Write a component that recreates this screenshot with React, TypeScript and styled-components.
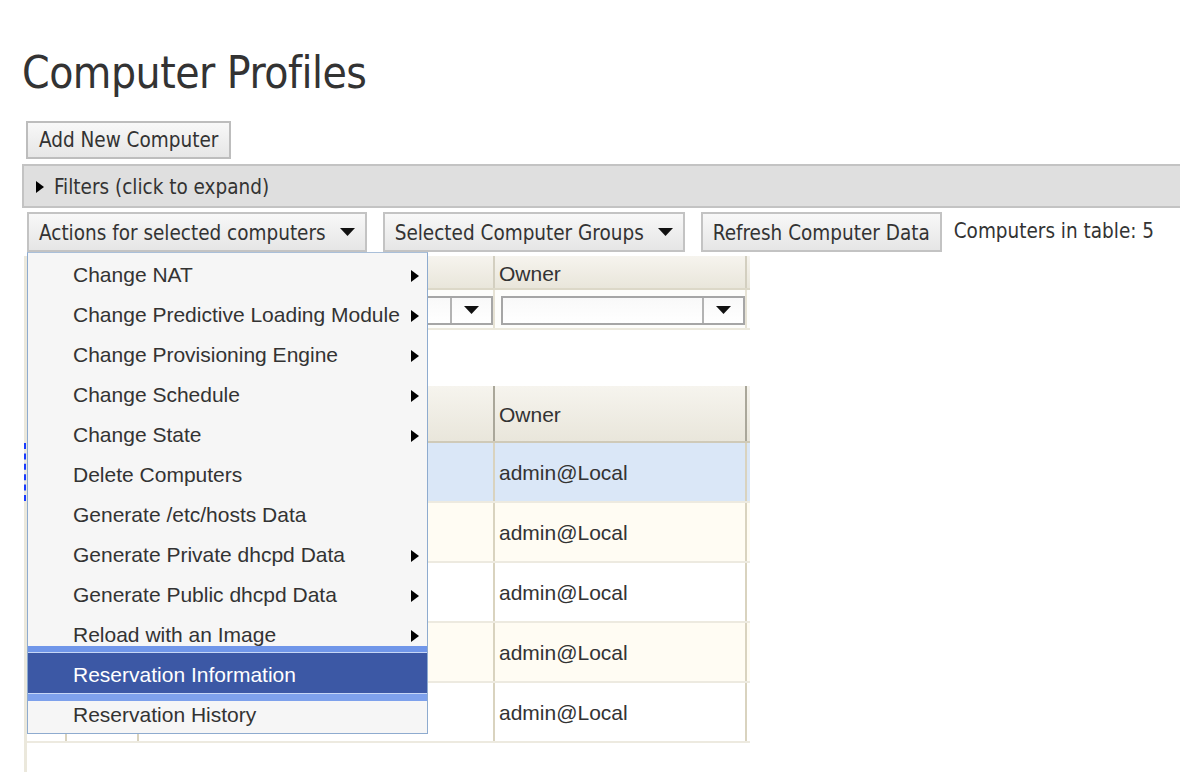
import React from 'react';
import styled, { createGlobalStyle } from 'styled-components';

const GlobalStyle = createGlobalStyle`
  body {
    margin: 0;
    background: #fff;
    color: #333;
    font-family: "DejaVu Sans Condensed", "DejaVu Sans", sans-serif;
    font-stretch: condensed;
    overflow: hidden;
  }
`;

const menuItems = [
  { label: 'Change NAT', sub: true },
  { label: 'Change Predictive Loading Module', sub: true },
  { label: 'Change Provisioning Engine', sub: true },
  { label: 'Change Schedule', sub: true },
  { label: 'Change State', sub: true },
  { label: 'Delete Computers', sub: false },
  { label: 'Generate /etc/hosts Data', sub: false },
  { label: 'Generate Private dhcpd Data', sub: true },
  { label: 'Generate Public dhcpd Data', sub: true },
  { label: 'Reload with an Image', sub: true },
  { label: 'Reservation Information', sub: false, active: true },
  { label: 'Reservation History', sub: false },
];

const rows = [
  { owner: 'admin@Local', tone: 'selected' },
  { owner: 'admin@Local', tone: 'cream' },
  { owner: 'admin@Local', tone: 'white' },
  { owner: 'admin@Local', tone: 'cream' },
  { owner: 'admin@Local', tone: 'white' },
];

const RightArrow = () => (
  <svg width="8" height="12" viewBox="0 0 8 12">
    <path d="M0 0 L8 6 L0 12 Z" fill="#000" />
  </svg>
);

const DownArrow = ({ w = 15 }: { w?: number }) => (
  <svg width={w} height="8" viewBox="0 0 15 8">
    <path d="M0 0 L15 0 L7.5 8 Z" fill="#111" />
  </svg>
);

const App = () => {
  return (
    <Page>
      <GlobalStyle />
      <Title>Computer Profiles</Title>
      <AddButton>Add New Computer</AddButton>
      <FilterBar>
        <RightArrow />
        <span>Filters (click to expand)</span>
      </FilterBar>
      <Toolbar>
        <Dropdown>
          <ToolButton>
            Actions for selected computers <DownArrow />
          </ToolButton>
          <Menu>
            {menuItems.map((item) => (
              <MenuItem key={item.label} $active={!!item.active}>
                <span>{item.label}</span>
                {item.sub && <RightArrow />}
              </MenuItem>
            ))}
          </Menu>
        </Dropdown>
        <ToolButton>
          Selected Computer Groups <DownArrow />
        </ToolButton>
        <ToolButton>Refresh Computer Data</ToolButton>
        <Count>Computers in table: 5</Count>
      </Toolbar>
      <Grid>
        <HeadRow $tall={false}>
          <HeadCell $dark={false} />
          <HeadCell $dark={false} />
          <HeadCell $dark={false} />
          <HeadCell $dark={false}>Owner</HeadCell>
        </HeadRow>
        <FilterRow>
          <FilterCell />
          <FilterCell />
          <FilterCell>
            <Select>
              <SelectArrow>
                <DownArrow w={15} />
              </SelectArrow>
            </Select>
          </FilterCell>
          <FilterCell>
            <Select>
              <SelectArrow>
                <DownArrow w={15} />
              </SelectArrow>
            </Select>
          </FilterCell>
        </FilterRow>
        <HeadRow $tall>
          <HeadCell $dark />
          <HeadCell $dark />
          <HeadCell $dark />
          <HeadCell $dark>Owner</HeadCell>
        </HeadRow>
        {rows.map((row, i) => (
          <DataRow key={i} $tone={row.tone}>
            <DataCell />
            <DataCell />
            <DataCell />
            <DataCell>{row.owner}</DataCell>
          </DataRow>
        ))}
      </Grid>
    </Page>
  );
};

export default App;

const Page = styled.div`
  display: flex;
  flex-direction: column;
  align-items: flex-start;
  padding: 47px 0 0 22px;
  height: 100vh;
  box-sizing: border-box;
  overflow: hidden;
`;

const Title = styled.h1`
  margin: 0 0 22px 0;
  font-size: 44px;
  letter-spacing: -0.5px;
  font-weight: normal;
  line-height: 52px;
  color: #333;
`;

const AddButton = styled.button`
  height: 38px;
  margin-left: 4px;
  padding: 0 11px;
  font-family: inherit;
  font-stretch: condensed;
  font-size: 20.5px;
  color: #333;
  background: linear-gradient(#f8f8f8, #e6e6e6);
  border: 2px solid #bdbdbd;
  border-radius: 0;
`;

const FilterBar = styled.div`
  align-self: stretch;
  margin: 5px -6px 0 0;
  height: 44px;
  box-sizing: border-box;
  display: flex;
  align-items: center;
  gap: 10px;
  padding: 2px 0 0 12px;
  background: #dfdfdf;
  border: 2px solid #c3c3c3;
  font-size: 20.5px;
  color: #333;
`;

const Toolbar = styled.div`
  margin: 4px 0 0 5px;
  display: flex;
  align-items: center;
  gap: 16px;
`;

const Dropdown = styled.div`
  position: relative;
`;

const ToolButton = styled.button`
  height: 40px;
  display: flex;
  align-items: center;
  gap: 14px;
  padding: 2px 10px 0;
  font-family: inherit;
  font-stretch: condensed;
  font-size: 20.5px;
  color: #333;
  background: linear-gradient(#f8f8f8, #e6e6e6);
  border: 2px solid #c3c3c3;
  border-radius: 0;
  svg {
    margin-top: -2px;
  }
`;

const Count = styled.span`
  font-size: 20.5px;
  color: #333;
  margin: -3px 0 0 -4px;
`;

const Menu = styled.div`
  position: absolute;
  top: 100%;
  left: 0;
  z-index: 10;
  width: 401px;
  box-sizing: border-box;
  background: #f6f6f6;
  border: 1px solid #8eabcf;
  border-top-color: #a9bfd9;
  padding: 0;
`;

const MenuItem = styled.div<{ $active: boolean }>`
  position: relative;
  height: 40px;
  box-sizing: border-box;
  display: flex;
  align-items: center;
  justify-content: space-between;
  padding: 3px 8px 0 45px;
  font-family: "Liberation Sans", Arial, sans-serif;
  font-stretch: normal;
  font-size: 21px;
  color: ${(p) => (p.$active ? '#fff' : '#333')};
  background: ${(p) => (p.$active ? '#3c58a5' : 'transparent')};
  z-index: ${(p) => (p.$active ? 1 : 0)};
  box-shadow: ${(p) =>
    p.$active
      ? '0 -1px 0 #c6d6f6, 0 -7px 0 #7096e9, 0 1px 0 #c6d6f6, 0 8px 0 #7ea1ec'
      : 'none'};
  svg {
    margin-top: 2px;
  }
`;

const Grid = styled.div`
  flex: 1;
  margin: 4px 0 0 2px;
  width: 723px;
  border-left: 3px solid #ebe8dc;
`;

const cols = '40px 72px 356px 252px';

const HeadRow = styled.div<{ $tall: boolean }>`
  display: grid;
  grid-template-columns: ${cols};
  height: ${(p) => (p.$tall ? 57 : 34)}px;
  margin-top: ${(p) => (p.$tall ? 56 : 0)}px;
  box-sizing: border-box;
  background: linear-gradient(#f6f4ee, #e9e6db);
  border-bottom: 2px solid ${(p) => (p.$tall ? '#cfcab8' : '#dcd8c8')};
`;

const HeadCell = styled.div<{ $dark: boolean }>`
  display: flex;
  align-items: center;
  padding: 3px 0 0 4px;
  border-right: 2px solid ${(p) => (p.$dark ? '#aaa79a' : '#d3cfc0')};
  font-family: "Liberation Sans", Arial, sans-serif;
  font-stretch: normal;
  font-size: 21px;
  color: #333;
`;

const FilterRow = styled.div`
  display: grid;
  grid-template-columns: ${cols};
  height: 40px;
  box-sizing: border-box;
  background: #fdfdfb;
  border-bottom: 2px solid #ece9dd;
`;

const FilterCell = styled.div`
  display: flex;
  align-items: center;
  padding: 2px 0 0 6px;
  border-right: 2px solid #e6e2d4;
`;

const Select = styled.div`
  flex: 1;
  height: 29px;
  box-sizing: border-box;
  display: flex;
  justify-content: flex-end;
  background: linear-gradient(#f9f9f9, #fff);
  border: 2px solid #a6a6a6;
`;

const SelectArrow = styled.div`
  width: 39px;
  display: flex;
  align-items: center;
  justify-content: center;
  border-left: 2px solid #b3b3b3;
`;

const toneBg: Record<string, string> = {
  selected: '#dae7f7',
  cream: '#fffcf3',
  white: '#ffffff',
};

const DataRow = styled.div<{ $tone: string }>`
  position: relative;
  display: grid;
  grid-template-columns: ${cols};
  height: 60px;
  box-sizing: border-box;
  background: ${(p) => toneBg[p.$tone]};
  border-bottom: 2px solid #edeae0;
  &::before {
    content: '';
    display: ${(p) => (p.$tone === 'selected' ? 'block' : 'none')};
    position: absolute;
    left: -3px;
    top: 0;
    bottom: 0;
    border-left: 2px dashed #1a3cff;
  }
`;

const DataCell = styled.div`
  display: flex;
  align-items: center;
  padding: 1px 0 0 4px;
  border-right: 2px solid #d9d3bf;
  font-family: "Liberation Sans", Arial, sans-serif;
  font-stretch: normal;
  font-size: 21px;
  color: #333;
`;
